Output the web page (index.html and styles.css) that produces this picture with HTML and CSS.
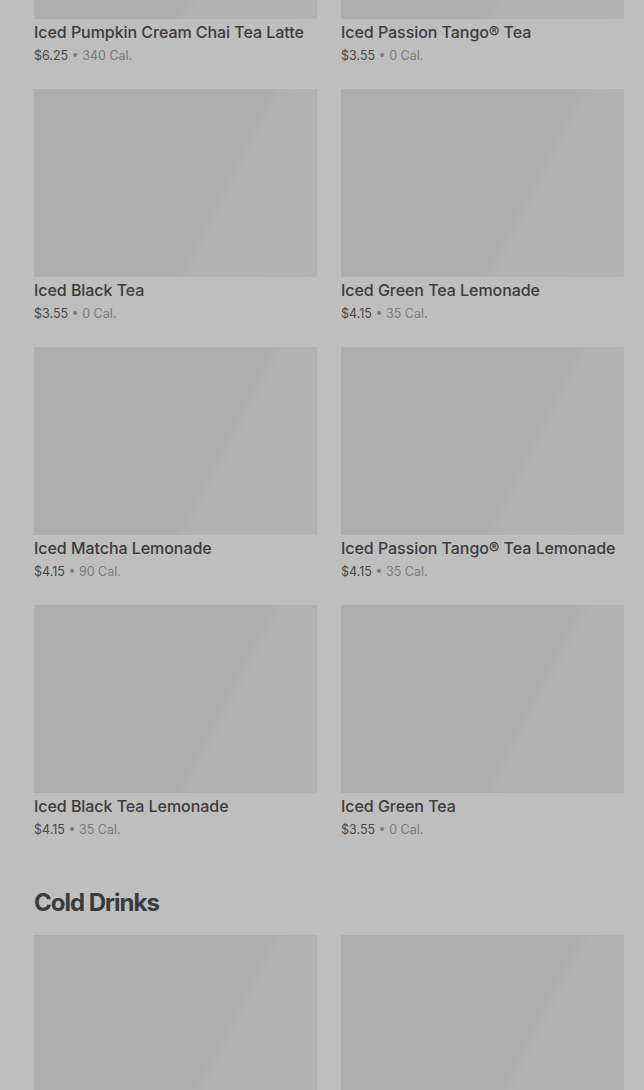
FILE: index.html
```html
<!DOCTYPE html>
<html>
<head>
<meta charset="utf-8">
<link rel="stylesheet" href="styles.css">
</head>
<body>
<main class="page">
  <section class="grid first">
    <article class="item">
      <div class="thumb"></div>
      <h3 class="name">Iced Pumpkin Cream Chai Tea Latte</h3>
      <p class="meta"><span class="price">$6.25</span> • 340 Cal.</p>
    </article>
    <article class="item">
      <div class="thumb"></div>
      <h3 class="name">Iced Passion Tango® Tea</h3>
      <p class="meta"><span class="price">$3.55</span> • 0 Cal.</p>
    </article>
    <article class="item">
      <div class="thumb"></div>
      <h3 class="name">Iced Black Tea</h3>
      <p class="meta"><span class="price">$3.55</span> • 0 Cal.</p>
    </article>
    <article class="item">
      <div class="thumb"></div>
      <h3 class="name">Iced Green Tea Lemonade</h3>
      <p class="meta"><span class="price">$4.15</span> • 35 Cal.</p>
    </article>
    <article class="item">
      <div class="thumb"></div>
      <h3 class="name">Iced Matcha Lemonade</h3>
      <p class="meta"><span class="price">$4.15</span> • 90 Cal.</p>
    </article>
    <article class="item">
      <div class="thumb"></div>
      <h3 class="name">Iced Passion Tango® Tea Lemonade</h3>
      <p class="meta"><span class="price">$4.15</span> • 35 Cal.</p>
    </article>
    <article class="item">
      <div class="thumb"></div>
      <h3 class="name">Iced Black Tea Lemonade</h3>
      <p class="meta"><span class="price">$4.15</span> • 35 Cal.</p>
    </article>
    <article class="item">
      <div class="thumb"></div>
      <h3 class="name">Iced Green Tea</h3>
      <p class="meta"><span class="price">$3.55</span> • 0 Cal.</p>
    </article>
  </section>
  <h2 class="section-title">Cold Drinks</h2>
  <section class="grid">
    <article class="item">
      <div class="thumb"></div>
    </article>
    <article class="item">
      <div class="thumb"></div>
    </article>
  </section>
</main>
</body>
</html>
```
FILE: styles.css
```css
html, body {
  margin: 0;
  padding: 0;
  background: #bebebe;
  overflow: hidden;
}
body {
  font-family: Inter, "Noto Sans", sans-serif;
  height: 1090px;
}
.page {
  padding: 0 20px 0 34px;
}
.grid {
  display: grid;
  grid-template-columns: 283px 283px;
  column-gap: 24px;
  row-gap: 12px;
}
.grid.first {
  margin-top: -169px;
}
.item {
  display: flex;
  flex-direction: column;
}
.thumb {
  height: 188px;
  background: linear-gradient(117deg, #adadad 0%, #adadad 62%, #b2b2b2 67%, #b3b3b3 100%);
}
.name {
  margin: 3px 0 0;
  font-size: 16px;
  font-weight: 500;
  line-height: 20px;
  color: #3c3c3c;
  letter-spacing: -0.05px;
  white-space: nowrap;
}
.meta {
  margin: 4px 0 0;
  font-size: 12.5px;
  line-height: 20px;
  color: #7a7a7a;
  height: 31px;
}
.price {
  color: #474747;
}
.section-title {
  margin: 0;
  padding: 36px 0 16px;
  font-size: 24px;
  font-weight: 700;
  line-height: 32px;
  letter-spacing: -1px;
  color: #3a3a3a;
}
```
